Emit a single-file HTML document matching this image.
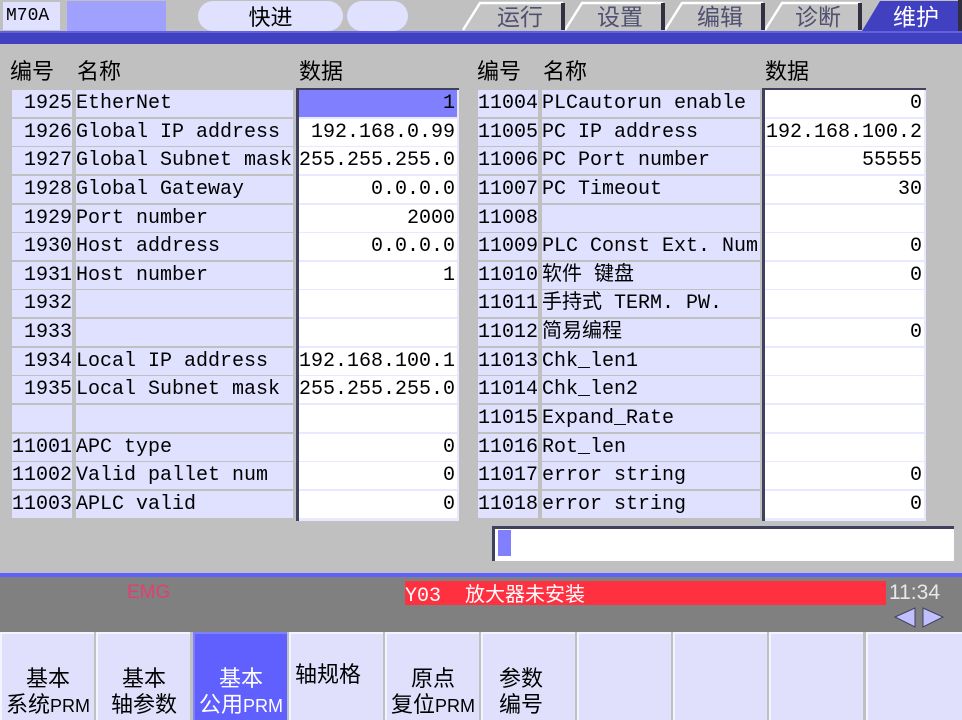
<!DOCTYPE html>
<html><head><meta charset="utf-8"><style>
*{margin:0;padding:0;box-sizing:border-box}
body{width:962px;height:720px;background:#c0c0c0;position:relative;overflow:hidden;font-family:"Liberation Mono","Noto Sans CJK SC",monospace;font-size:20px;color:#000}
.a{position:absolute}
.c{position:absolute;height:27px;line-height:27px;background:#e0e0ff;white-space:pre;overflow:hidden}
.n{text-align:right;width:60px}
.d{background:#fff;text-align:right;padding-right:2px}
.h{position:absolute;top:56px;font-family:"Noto Sans CJK SC",sans-serif;font-size:22px;line-height:28px}
.btn{position:absolute;top:632px;height:88px;width:94px;background:#e0e0fc;border-top:2px solid #f4f4ff;border-left:2px solid #f4f4ff;font-family:"Noto Sans CJK SC",sans-serif;font-size:22px;line-height:26px;text-align:center}
.btn small{font-family:"Liberation Sans",sans-serif;font-size:18px}
</style></head><body>
<!-- top bar -->
<div class="a" style="left:3px;top:2px;width:57px;height:28px;background:#e0e0ff;font-size:18px;line-height:28px;padding-left:3px">M70A</div>
<div class="a" style="left:67px;top:1px;width:99px;height:30px;background:#a0a0ff"></div>
<div class="a" style="left:198px;top:1px;width:145px;height:30px;background:#e0e0ff;border-radius:15px;text-align:center;font-family:'Noto Sans CJK SC',sans-serif;font-size:22px;line-height:30px">快进</div>
<div class="a" style="left:347px;top:1px;width:61px;height:30px;background:#e0e0ff;border-radius:15px"></div>
<svg class="a" style="left:450px;top:0" width="512" height="32">
<g fill="#c4c4c4" stroke="none">
<polygon points="13,30 30,3 113,3 113,30"/>
<polygon points="115,30 132,3 213,3 213,30"/>
<polygon points="215,30 232,3 313,3 313,30"/>
<polygon points="315,30 332,3 410,3 410,30"/>
</g>
<g stroke="#fff" stroke-width="2.5" fill="none">
<polyline points="13,30 30,3 113,3"/><polyline points="115,30 132,3 213,3"/><polyline points="215,30 232,3 313,3"/><polyline points="315,30 332,3 410,3"/>
</g>
<g fill="#303040"><rect x="111" y="3" width="4" height="27"/><rect x="211" y="3" width="4" height="27"/><rect x="311" y="3" width="4" height="27"/><rect x="408" y="3" width="4" height="27"/><rect x="508" y="0" width="4" height="32"/></g>
<polygon points="412,31 430,1 508,1 508,31" fill="#4040c0"/>
<g font-family="Noto Sans CJK SC,sans-serif" font-size="23" fill="#505070" text-anchor="middle">
<text x="70" y="25">运行</text><text x="170" y="25">设置</text><text x="270" y="25">编辑</text><text x="368" y="25">诊断</text>
<text x="466" y="25" fill="#fff">维护</text></g>
</svg>
<div class="a" style="left:0;top:31px;width:962px;height:13px;background:#4040c0;border-top:2px solid #6060e0"></div>
<!-- headers -->
<div class="h" style="left:10px">编号</div><div class="h" style="left:77px">名称</div><div class="h" style="left:299px">数据</div>
<div class="h" style="left:477px">编号</div><div class="h" style="left:543px">名称</div><div class="h" style="left:765px">数据</div>
<!-- data frames -->
<div class="a" style="left:296px;top:88px;width:163px;height:433px;background:#e8e8ff;border-left:3px solid #404060;border-top:2px solid #404060"></div>
<div class="a" style="left:762px;top:88px;width:164px;height:433px;background:#e8e8ff;border-left:3px solid #404060;border-top:2px solid #404060"></div>
<div class="a" style="left:492px;top:526px;width:462px;height:35px;background:#fff;border-left:3px solid #404060;border-top:3px solid #404060"></div>
<div class="a" style="left:498px;top:530px;width:13px;height:26px;background:#8080ff"></div>

<!-- left rows -->
<div class="c n" style="left:12px;top:90px">1925</div><div class="c" style="left:76px;top:90px;width:217px">EtherNet</div><div class="c d" style="left:299px;top:90px;width:158px;background:#8080ff">1</div>
<div class="c n" style="left:12px;top:119px">1926</div><div class="c" style="left:76px;top:119px;width:217px">Global IP address</div><div class="c d" style="left:299px;top:119px;width:158px">192.168.0.99</div>
<div class="c n" style="left:12px;top:147px">1927</div><div class="c" style="left:76px;top:147px;width:217px">Global Subnet mask</div><div class="c d" style="left:299px;top:147px;width:158px">255.255.255.0</div>
<div class="c n" style="left:12px;top:176px">1928</div><div class="c" style="left:76px;top:176px;width:217px">Global Gateway</div><div class="c d" style="left:299px;top:176px;width:158px">0.0.0.0</div>
<div class="c n" style="left:12px;top:205px">1929</div><div class="c" style="left:76px;top:205px;width:217px">Port number</div><div class="c d" style="left:299px;top:205px;width:158px">2000</div>
<div class="c n" style="left:12px;top:233px">1930</div><div class="c" style="left:76px;top:233px;width:217px">Host address</div><div class="c d" style="left:299px;top:233px;width:158px">0.0.0.0</div>
<div class="c n" style="left:12px;top:262px">1931</div><div class="c" style="left:76px;top:262px;width:217px">Host number</div><div class="c d" style="left:299px;top:262px;width:158px">1</div>
<div class="c n" style="left:12px;top:290px">1932</div><div class="c" style="left:76px;top:290px;width:217px"></div><div class="c d" style="left:299px;top:290px;width:158px"></div>
<div class="c n" style="left:12px;top:319px">1933</div><div class="c" style="left:76px;top:319px;width:217px"></div><div class="c d" style="left:299px;top:319px;width:158px"></div>
<div class="c n" style="left:12px;top:348px">1934</div><div class="c" style="left:76px;top:348px;width:217px">Local IP address</div><div class="c d" style="left:299px;top:348px;width:158px">192.168.100.1</div>
<div class="c n" style="left:12px;top:376px">1935</div><div class="c" style="left:76px;top:376px;width:217px">Local Subnet mask</div><div class="c d" style="left:299px;top:376px;width:158px">255.255.255.0</div>
<div class="c n" style="left:12px;top:405px"></div><div class="c" style="left:76px;top:405px;width:217px"></div><div class="c d" style="left:299px;top:405px;width:158px"></div>
<div class="c n" style="left:12px;top:434px">11001</div><div class="c" style="left:76px;top:434px;width:217px">APC type</div><div class="c d" style="left:299px;top:434px;width:158px">0</div>
<div class="c n" style="left:12px;top:462px">11002</div><div class="c" style="left:76px;top:462px;width:217px">Valid pallet num</div><div class="c d" style="left:299px;top:462px;width:158px">0</div>
<div class="c n" style="left:12px;top:491px">11003</div><div class="c" style="left:76px;top:491px;width:217px">APLC valid</div><div class="c d" style="left:299px;top:491px;width:158px">0</div>

<!-- right rows -->
<div class="c n" style="left:478px;top:90px">11004</div><div class="c" style="left:542px;top:90px;width:218px">PLCautorun enable</div><div class="c d" style="left:765px;top:90px;width:159px">0</div>
<div class="c n" style="left:478px;top:119px">11005</div><div class="c" style="left:542px;top:119px;width:218px">PC IP address</div><div class="c d" style="left:765px;top:119px;width:159px">192.168.100.2</div>
<div class="c n" style="left:478px;top:147px">11006</div><div class="c" style="left:542px;top:147px;width:218px">PC Port number</div><div class="c d" style="left:765px;top:147px;width:159px">55555</div>
<div class="c n" style="left:478px;top:176px">11007</div><div class="c" style="left:542px;top:176px;width:218px">PC Timeout</div><div class="c d" style="left:765px;top:176px;width:159px">30</div>
<div class="c n" style="left:478px;top:205px">11008</div><div class="c" style="left:542px;top:205px;width:218px"></div><div class="c d" style="left:765px;top:205px;width:159px"></div>
<div class="c n" style="left:478px;top:233px">11009</div><div class="c" style="left:542px;top:233px;width:218px">PLC Const Ext. Num</div><div class="c d" style="left:765px;top:233px;width:159px">0</div>
<div class="c n" style="left:478px;top:262px">11010</div><div class="c" style="left:542px;top:262px;width:218px">软件 键盘</div><div class="c d" style="left:765px;top:262px;width:159px">0</div>
<div class="c n" style="left:478px;top:290px">11011</div><div class="c" style="left:542px;top:290px;width:218px">手持式 TERM. PW.</div><div class="c d" style="left:765px;top:290px;width:159px"></div>
<div class="c n" style="left:478px;top:319px">11012</div><div class="c" style="left:542px;top:319px;width:218px">简易编程</div><div class="c d" style="left:765px;top:319px;width:159px">0</div>
<div class="c n" style="left:478px;top:348px">11013</div><div class="c" style="left:542px;top:348px;width:218px">Chk_len1</div><div class="c d" style="left:765px;top:348px;width:159px"></div>
<div class="c n" style="left:478px;top:376px">11014</div><div class="c" style="left:542px;top:376px;width:218px">Chk_len2</div><div class="c d" style="left:765px;top:376px;width:159px"></div>
<div class="c n" style="left:478px;top:405px">11015</div><div class="c" style="left:542px;top:405px;width:218px">Expand_Rate</div><div class="c d" style="left:765px;top:405px;width:159px"></div>
<div class="c n" style="left:478px;top:434px">11016</div><div class="c" style="left:542px;top:434px;width:218px">Rot_len</div><div class="c d" style="left:765px;top:434px;width:159px"></div>
<div class="c n" style="left:478px;top:462px">11017</div><div class="c" style="left:542px;top:462px;width:218px">error string</div><div class="c d" style="left:765px;top:462px;width:159px">0</div>
<div class="c n" style="left:478px;top:491px">11018</div><div class="c" style="left:542px;top:491px;width:218px">error string</div><div class="c d" style="left:765px;top:491px;width:159px">0</div>

<!-- status band -->
<div class="a" style="left:0;top:573px;width:962px;height:59px;background:#808080;border-top:4px solid #6060ff"></div>
<div class="a" style="left:127px;top:581px;font-family:'Liberation Sans',sans-serif;font-size:19px;line-height:24px;color:#e04070">EMG</div>
<div class="a" style="left:405px;top:581px;width:481px;height:24px;background:#ff3040;color:#fff;font-size:20px;line-height:24px;white-space:pre">Y03  <span style="font-family:'Noto Sans CJK SC',sans-serif">放大器未安装</span></div>
<div class="a" style="left:889px;top:580px;font-family:'Liberation Sans',sans-serif;font-size:21px;line-height:26px;color:#e8e8e8">11:34</div>
<svg class="a" style="left:893px;top:606px" width="54" height="24"><polygon points="2,11 22,2 22,21" fill="#c0c0ff" stroke="#404060" stroke-width="1"/><polygon points="30,2 50,11 30,21" fill="#c0c0ff" stroke="#404060" stroke-width="1"/></svg>

<!-- buttons -->
<div class="btn" style="left:0px;padding-top:30px">基本<br>系统<small>PRM</small></div>
<div class="btn" style="left:96px;padding-top:30px">基本<br>轴参数</div>
<div class="btn" style="left:193px;padding-top:30px;background:#6060ff;color:#fff;border-color:#8080ff">基本<br>公用<small>PRM</small></div>
<div class="btn" style="left:289px;padding-top:26px;text-align:left;padding-left:4px">轴规格</div>
<div class="btn" style="left:385px;padding-top:30px">原点<br>复位<small>PRM</small></div>
<div class="btn" style="left:481px;padding-top:30px;text-align:left;padding-left:16px">参数<br>编号</div>
<div class="btn" style="left:577px"></div>
<div class="btn" style="left:673px"></div>
<div class="btn" style="left:769px"></div>
<div class="btn" style="left:866px;width:96px"></div>
</body></html>
